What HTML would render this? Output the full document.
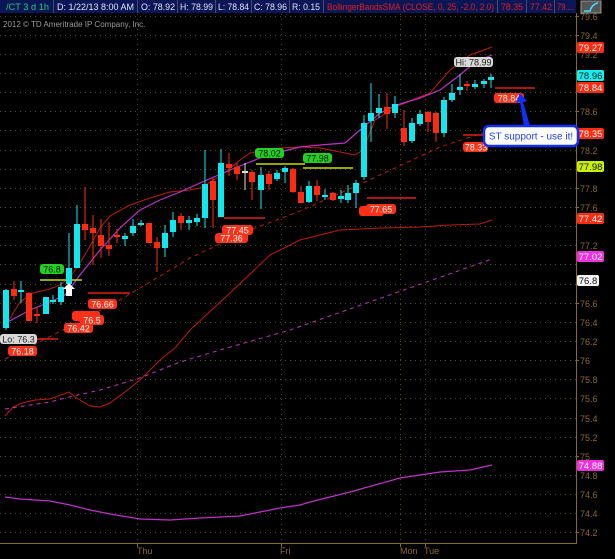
<!DOCTYPE html>
<html><head><meta charset="utf-8"><style>
html,body{margin:0;padding:0;background:#000;width:615px;height:559px;overflow:hidden;font-family:"Liberation Sans",sans-serif}
</style></head><body>
<svg width="615" height="559" xmlns="http://www.w3.org/2000/svg" style="display:block">
<rect width="615" height="559" fill="#000"/>
<!-- header -->
<rect x="0" y="0" width="576" height="13" fill="#0b1656"/>
<g stroke="#4a4a6a" stroke-width="1">
<line x1="53.5" y1="0" x2="53.5" y2="13"/><line x1="137.5" y1="0" x2="137.5" y2="13"/><line x1="177.5" y1="0" x2="177.5" y2="13"/><line x1="215.5" y1="0" x2="215.5" y2="13"/><line x1="251.5" y1="0" x2="251.5" y2="13"/><line x1="289.5" y1="0" x2="289.5" y2="13"/><line x1="323.5" y1="0" x2="323.5" y2="13"/><line x1="497.5" y1="0" x2="497.5" y2="13"/><line x1="526.5" y1="0" x2="526.5" y2="13"/><line x1="554.5" y1="0" x2="554.5" y2="13"/>
</g>
<g font-size="9" fill="#dfe4ff" lengthAdjust="spacingAndGlyphs">
<text x="6" y="10" fill="#20d070" textLength="43" lengthAdjust="spacingAndGlyphs">/CT 3 d 1h</text>
<text x="57" y="10" textLength="77" lengthAdjust="spacingAndGlyphs">D: 1/22/13 8:00 AM</text>
<text x="141" y="10" textLength="34" lengthAdjust="spacingAndGlyphs">O: 78.92</text>
<text x="180" y="10" textLength="33" lengthAdjust="spacingAndGlyphs">H: 78.99</text>
<text x="218" y="10" textLength="31" lengthAdjust="spacingAndGlyphs">L: 78.84</text>
<text x="254" y="10" textLength="33" lengthAdjust="spacingAndGlyphs">C: 78.96</text>
<text x="292" y="10" textLength="28" lengthAdjust="spacingAndGlyphs">R: 0.15</text>
<text x="327" y="10" fill="#e02020" textLength="167" lengthAdjust="spacingAndGlyphs">BollingerBandsSMA (CLOSE, 0, 25, -2.0, 2.0)</text>
<text x="501" y="10" fill="#e02020" textLength="22" lengthAdjust="spacingAndGlyphs">78.35</text>
<text x="530" y="10" fill="#e02020" textLength="22" lengthAdjust="spacingAndGlyphs">77.42</text>
<text x="557" y="10" fill="#e02020" textLength="17" lengthAdjust="spacingAndGlyphs">79....</text>
</g>
<rect x="581" y="1" width="20" height="12" fill="#555" stroke="#999"/>
<path d="M584 11 L590 11 Q592 4 598 3" stroke="#40e0ff" fill="none" stroke-width="1.5"/>
<text x="3" y="27" font-size="8" fill="#9a9a9a">2012 © TD Ameritrade IP Company, Inc.</text>
<!-- grid -->
<g stroke="#5a4818" stroke-width="1" stroke-dasharray="1,4">
<line x1="0" x2="576" y1="16.5" y2="16.5"/><line x1="0" x2="576" y1="35.5" y2="35.5"/><line x1="0" x2="576" y1="54.5" y2="54.5"/><line x1="0" x2="576" y1="73.5" y2="73.5"/><line x1="0" x2="576" y1="92.5" y2="92.5"/><line x1="0" x2="576" y1="111.5" y2="111.5"/><line x1="0" x2="576" y1="130.5" y2="130.5"/><line x1="0" x2="576" y1="150.5" y2="150.5"/><line x1="0" x2="576" y1="169.5" y2="169.5"/><line x1="0" x2="576" y1="188.5" y2="188.5"/><line x1="0" x2="576" y1="207.5" y2="207.5"/><line x1="0" x2="576" y1="226.5" y2="226.5"/><line x1="0" x2="576" y1="245.5" y2="245.5"/><line x1="0" x2="576" y1="264.5" y2="264.5"/><line x1="0" x2="576" y1="284.5" y2="284.5"/><line x1="0" x2="576" y1="303.5" y2="303.5"/><line x1="0" x2="576" y1="322.5" y2="322.5"/><line x1="0" x2="576" y1="341.5" y2="341.5"/><line x1="0" x2="576" y1="360.5" y2="360.5"/><line x1="0" x2="576" y1="379.5" y2="379.5"/><line x1="0" x2="576" y1="398.5" y2="398.5"/><line x1="0" x2="576" y1="418.5" y2="418.5"/><line x1="0" x2="576" y1="437.5" y2="437.5"/><line x1="0" x2="576" y1="456.5" y2="456.5"/><line x1="0" x2="576" y1="475.5" y2="475.5"/><line x1="0" x2="576" y1="494.5" y2="494.5"/><line x1="0" x2="576" y1="513.5" y2="513.5"/><line x1="0" x2="576" y1="532.5" y2="532.5"/>
<line x1="137.5" x2="137.5" y1="14" y2="543"/><line x1="281.5" x2="281.5" y1="14" y2="543"/><line x1="400.5" x2="400.5" y1="14" y2="543"/><line x1="425.5" x2="425.5" y1="14" y2="543"/>
</g>
<!-- axes -->
<g stroke="#8a6a2a" stroke-width="1"><line x1="576.5" y1="13" x2="576.5" y2="544"/><line x1="0" y1="543.5" x2="577" y2="543.5"/>
<line x1="137.5" y1="543" x2="137.5" y2="547"/><line x1="281.5" y1="543" x2="281.5" y2="547"/><line x1="400.5" y1="543" x2="400.5" y2="547"/><line x1="425.5" y1="543" x2="425.5" y2="547"/></g>
<g font-size="9" fill="#8a6a2a">
<text x="137" y="554">Thu</text><text x="280" y="554">Fri</text><text x="400" y="554">Mon</text><text x="424" y="554">Tue</text>
</g>
<g font-size="9" fill="#8a6a2a">
<text x="580" y="20">79.6</text><text x="580" y="39">79.4</text><text x="580" y="58">79.2</text><text x="580" y="115">78.6</text><text x="580" y="154">78.2</text><text x="580" y="192">77.8</text><text x="580" y="211">77.6</text><text x="580" y="249">77.2</text><text x="580" y="307">76.6</text><text x="580" y="326">76.4</text><text x="580" y="345">76.2</text><text x="580" y="364">76</text><text x="580" y="383">75.8</text><text x="580" y="402">75.6</text><text x="580" y="422">75.4</text><text x="580" y="441">75.2</text><text x="580" y="460">75</text><text x="580" y="479">74.8</text><text x="580" y="498">74.6</text><text x="580" y="517">74.4</text><text x="580" y="536">74.2</text>
</g>
<g stroke="#8a6a2a"><line x1="576" x2="579" y1="16.5" y2="16.5"/><line x1="576" x2="579" y1="35.5" y2="35.5"/><line x1="576" x2="579" y1="111.5" y2="111.5"/><line x1="576" x2="579" y1="188.5" y2="188.5"/><line x1="576" x2="579" y1="207.5" y2="207.5"/><line x1="576" x2="579" y1="303.5" y2="303.5"/><line x1="576" x2="579" y1="360.5" y2="360.5"/><line x1="576" x2="579" y1="456.5" y2="456.5"/><line x1="576" x2="579" y1="532.5" y2="532.5"/></g>
<!-- lines -->
<polyline fill="none" stroke="#c01a0a" stroke-width="1" points="6,325 20,302 33,293 50,289 60,285 70,277 80,263 90,246 100,228 110,216 130,205 150,198 170,192 190,190 200,188 222,175 240,160 250,153 280,148 300,147 320,148 340,152 355,155 363,150 375,120 400,105 430,93 450,70 470,55 492,47"/>
<polyline fill="none" stroke="#c01a0a" stroke-width="1" points="5,416 13,407 22,403 35,400 50,399 69,392 75,397 90,406 100,407 110,403 125,392 140,380 160,360 175,348 190,330 230,293 270,255 300,240 340,230 380,228 420,227 450,225 480,224 492,220"/>
<polyline fill="none" stroke="#c01a0a" stroke-width="1" stroke-dasharray="4,4" points="5,359 63,330 120,300 190,258 250,230 300,211 365,182 440,147 492,130"/>
<polyline fill="none" stroke="#c030c0" stroke-width="1" stroke-dasharray="4,4" points="5,409 30,405 50,402 69,397 100,390 140,378 180,362 220,350 290,330 492,259"/>
<polyline fill="none" stroke="#c030c8" stroke-width="1.2" points="6,323 30,310 50,302 65,295 80,275 100,250 120,228 140,210 160,200 180,192 200,183 230,170 260,158 280,152 300,147 320,145 345,143 360,130 380,113 400,104 420,98 440,90 460,75 475,62 492,55"/>
<polyline fill="none" stroke="#c030c8" stroke-width="1.2" points="5,497 20,499 50,501 70,505 90,510 110,514 140,519 170,520 200,518 240,516 260,512 280,508 300,505 310,502 350,492 400,478 440,472 470,470 492,465"/>
<!-- annotations -->
<g stroke="#e02010" stroke-width="1.5">
<line x1="495" y1="88" x2="535" y2="88"/><line x1="463" y1="135" x2="500" y2="135"/><line x1="367" y1="198" x2="416" y2="198"/><line x1="224" y1="218" x2="265" y2="218"/><line x1="88" y1="293" x2="130" y2="293"/><line x1="36" y1="339" x2="58" y2="339"/>
</g>
<g stroke="#c8e000" stroke-width="1.5"><line x1="256" y1="164" x2="305" y2="164"/><line x1="303" y1="168" x2="353" y2="168"/><line x1="40" y1="280" x2="82" y2="280"/></g>
<!-- candles -->
<g stroke-width="1">
<line x1="6" y1="289" x2="6" y2="330" stroke="#10e8f0"/><rect x="3" y="290" width="6" height="38" fill="#10e8f0"/>
<line x1="14" y1="281" x2="14" y2="300" stroke="#ff2a10"/><rect x="11" y="289" width="6" height="7" fill="#ff2a10"/>
<line x1="21" y1="281" x2="21" y2="303" stroke="#10e8f0"/><rect x="18" y="290" width="6" height="2" fill="#10e8f0"/>
<line x1="29" y1="292" x2="29" y2="321" stroke="#ff2a10"/><rect x="26" y="293" width="6" height="28" fill="#ff2a10"/>
<line x1="37" y1="307" x2="37" y2="323" stroke="#ff2a10"/><rect x="34" y="314" width="6" height="2" fill="#ff2a10"/>
<line x1="45" y1="297" x2="45" y2="314" stroke="#10e8f0"/><rect x="43" y="297" width="6" height="17" fill="#10e8f0"/>
<line x1="53" y1="295" x2="53" y2="304" stroke="#10e8f0"/><rect x="50" y="300" width="6" height="2" fill="#10e8f0"/>
<line x1="61" y1="282" x2="61" y2="305" stroke="#10e8f0"/><rect x="58" y="287" width="6" height="15" fill="#10e8f0"/>
<line x1="69" y1="233" x2="69" y2="290" stroke="#10e8f0"/><rect x="66" y="268" width="6" height="16" fill="#10e8f0"/>
<line x1="77" y1="205" x2="77" y2="268" stroke="#10e8f0"/><rect x="74" y="224" width="6" height="44" fill="#10e8f0"/>
<line x1="85" y1="187" x2="85" y2="240" stroke="#ff2a10"/><rect x="82" y="224" width="6" height="6" fill="#ff2a10"/>
<line x1="93" y1="215" x2="93" y2="265" stroke="#ff2a10"/><rect x="90" y="228" width="6" height="5" fill="#ff2a10"/>
<line x1="101" y1="219" x2="101" y2="258" stroke="#ff2a10"/><rect x="98" y="235" width="6" height="11" fill="#ff2a10"/>
<line x1="109" y1="222" x2="109" y2="256" stroke="#ff2a10"/><rect x="106" y="245" width="6" height="4" fill="#ff2a10"/>
<line x1="117" y1="229" x2="117" y2="243" stroke="#ff2a10"/><rect x="114" y="235" width="6" height="2" fill="#ff2a10"/>
<line x1="125" y1="233" x2="125" y2="246" stroke="#10e8f0"/><rect x="122" y="236" width="6" height="3" fill="#10e8f0"/>
<line x1="133" y1="219" x2="133" y2="236" stroke="#10e8f0"/><rect x="130" y="226" width="6" height="7" fill="#10e8f0"/>
<line x1="141" y1="220" x2="141" y2="226" stroke="#10e8f0"/><rect x="138" y="223" width="6" height="2" fill="#10e8f0"/>
<line x1="149" y1="223" x2="149" y2="243" stroke="#ff2a10"/><rect x="146" y="223" width="6" height="20" fill="#ff2a10"/>
<line x1="157" y1="237" x2="157" y2="272" stroke="#ff2a10"/><rect x="154" y="242" width="6" height="6" fill="#ff2a10"/>
<line x1="165" y1="225" x2="165" y2="257" stroke="#10e8f0"/><rect x="162" y="233" width="6" height="15" fill="#10e8f0"/>
<line x1="173" y1="212" x2="173" y2="237" stroke="#10e8f0"/><rect x="170" y="220" width="6" height="12" fill="#10e8f0"/>
<line x1="181" y1="213" x2="181" y2="230" stroke="#ff2a10"/><rect x="178" y="216" width="6" height="7" fill="#ff2a10"/>
<line x1="189" y1="216" x2="189" y2="230" stroke="#10e8f0"/><rect x="186" y="220" width="6" height="3" fill="#10e8f0"/>
<line x1="197" y1="214" x2="197" y2="226" stroke="#10e8f0"/><rect x="194" y="218" width="6" height="4" fill="#10e8f0"/>
<line x1="205" y1="150" x2="205" y2="228" stroke="#10e8f0"/><rect x="202" y="184" width="6" height="34" fill="#10e8f0"/>
<line x1="213" y1="178" x2="213" y2="228" stroke="#ff2a10"/><rect x="210" y="181" width="6" height="19" fill="#ff2a10"/>
<line x1="221" y1="149" x2="221" y2="217" stroke="#10e8f0"/><rect x="218" y="163" width="6" height="54" fill="#10e8f0"/>
<line x1="229" y1="153" x2="229" y2="176" stroke="#ff2a10"/><rect x="226" y="164" width="6" height="4" fill="#ff2a10"/>
<line x1="237" y1="163" x2="237" y2="180" stroke="#ff2a10"/><rect x="234" y="167" width="6" height="7" fill="#ff2a10"/>
<line x1="245" y1="163" x2="245" y2="190" stroke="#ddd"/><rect x="242" y="171" width="6" height="2" fill="#ddd"/>
<line x1="252" y1="170" x2="252" y2="200" stroke="#ff2a10"/><rect x="249" y="172" width="6" height="10" fill="#ff2a10"/>
<line x1="261" y1="167" x2="261" y2="209" stroke="#10e8f0"/><rect x="258" y="175" width="6" height="15" fill="#10e8f0"/>
<line x1="269" y1="171" x2="269" y2="190" stroke="#ff2a10"/><rect x="266" y="174" width="6" height="10" fill="#ff2a10"/>
<line x1="277" y1="170" x2="277" y2="181" stroke="#10e8f0"/><rect x="274" y="173" width="6" height="6" fill="#10e8f0"/>
<line x1="285" y1="166" x2="285" y2="183" stroke="#10e8f0"/><rect x="282" y="168" width="6" height="4" fill="#10e8f0"/>
<line x1="293" y1="168" x2="293" y2="193" stroke="#ff2a10"/><rect x="290" y="169" width="6" height="23" fill="#ff2a10"/>
<line x1="301" y1="186" x2="301" y2="203" stroke="#ff2a10"/><rect x="298" y="192" width="6" height="11" fill="#ff2a10"/>
<line x1="309" y1="181" x2="309" y2="203" stroke="#10e8f0"/><rect x="306" y="186" width="6" height="16" fill="#10e8f0"/>
<line x1="317" y1="180" x2="317" y2="201" stroke="#ff2a10"/><rect x="314" y="186" width="6" height="9" fill="#ff2a10"/>
<line x1="325" y1="189" x2="325" y2="200" stroke="#10e8f0"/><rect x="322" y="195" width="6" height="2" fill="#10e8f0"/>
<line x1="333" y1="192" x2="333" y2="201" stroke="#ff2a10"/><rect x="330" y="193" width="6" height="7" fill="#ff2a10"/>
<line x1="341" y1="190" x2="341" y2="203" stroke="#10e8f0"/><rect x="338" y="196" width="6" height="3" fill="#10e8f0"/>
<line x1="348" y1="185" x2="348" y2="203" stroke="#10e8f0"/><rect x="345" y="193" width="6" height="7" fill="#10e8f0"/>
<line x1="356" y1="180" x2="356" y2="208" stroke="#10e8f0"/><rect x="353" y="183" width="6" height="10" fill="#10e8f0"/>
<line x1="364" y1="115" x2="364" y2="180" stroke="#10e8f0"/><rect x="361" y="123" width="6" height="54" fill="#10e8f0"/>
<line x1="371" y1="83" x2="371" y2="142" stroke="#10e8f0"/><rect x="368" y="113" width="6" height="8" fill="#10e8f0"/>
<line x1="379" y1="94" x2="379" y2="118" stroke="#10e8f0"/><rect x="376" y="108" width="6" height="5" fill="#10e8f0"/>
<line x1="387" y1="93" x2="387" y2="129" stroke="#ff2a10"/><rect x="384" y="107" width="6" height="7" fill="#ff2a10"/>
<line x1="395" y1="96" x2="395" y2="118" stroke="#10e8f0"/><rect x="392" y="104" width="6" height="9" fill="#10e8f0"/>
<line x1="404" y1="110" x2="404" y2="146" stroke="#ff2a10"/><rect x="401" y="128" width="6" height="14" fill="#ff2a10"/>
<line x1="412" y1="118" x2="412" y2="143" stroke="#10e8f0"/><rect x="409" y="123" width="6" height="18" fill="#10e8f0"/>
<line x1="420" y1="110" x2="420" y2="126" stroke="#10e8f0"/><rect x="417" y="114" width="6" height="10" fill="#10e8f0"/>
<line x1="428" y1="111" x2="428" y2="132" stroke="#ff2a10"/><rect x="425" y="112" width="6" height="10" fill="#ff2a10"/>
<line x1="436" y1="112" x2="436" y2="142" stroke="#ff2a10"/><rect x="433" y="113" width="6" height="20" fill="#ff2a10"/>
<line x1="444" y1="97" x2="444" y2="137" stroke="#10e8f0"/><rect x="441" y="100" width="6" height="33" fill="#10e8f0"/>
<line x1="452" y1="84" x2="452" y2="102" stroke="#10e8f0"/><rect x="449" y="93" width="6" height="7" fill="#10e8f0"/>
<line x1="460" y1="74" x2="460" y2="95" stroke="#10e8f0"/><rect x="457" y="87" width="6" height="3" fill="#10e8f0"/>
<line x1="467" y1="81" x2="467" y2="91" stroke="#ff2a10"/><rect x="464" y="84" width="6" height="2" fill="#ff2a10"/>
<line x1="475" y1="80" x2="475" y2="89" stroke="#10e8f0"/><rect x="472" y="84" width="6" height="3" fill="#10e8f0"/>
<line x1="484" y1="79" x2="484" y2="88" stroke="#10e8f0"/><rect x="481" y="81" width="6" height="3" fill="#10e8f0"/>
<line x1="491" y1="74" x2="491" y2="88" stroke="#10e8f0"/><rect x="488" y="77" width="6" height="3" fill="#10e8f0"/>
</g>
<path d="M66 296 L66 289 L63 289 L69 283 L75 289 L72 289 L72 296Z" fill="#fff"/>
<g font-size="9" text-anchor="middle">
<rect x="454" y="57" width="39" height="10" rx="3" fill="#d8d8d8"/><text x="473.5" y="65.5" fill="#222">Hi: 78.99</text>
<rect x="0" y="334" width="37" height="10" rx="3" fill="#d8d8d8"/><text x="18.5" y="342.5" fill="#222">Lo: 76.3</text>
<rect x="255" y="148" width="29" height="10" rx="3" fill="#22d022"/><text x="269.5" y="156.5" fill="#111">78.02</text>
<rect x="303" y="153" width="29" height="10" rx="3" fill="#22d022"/><text x="317.5" y="161.5" fill="#111">77.98</text>
<rect x="40" y="264" width="24" height="10" rx="3" fill="#22d022"/><text x="52" y="272.5" fill="#111">76.8</text>
<g fill="#ff3018"><rect x="494" y="93" width="30" height="10" rx="3"/><rect x="463" y="142" width="25" height="10" rx="3"/><rect x="359" y="206" width="25" height="10" rx="3"/><rect x="366" y="204" width="30" height="10" rx="3"/><rect x="215" y="233" width="33" height="10" rx="3"/><rect x="222" y="225" width="31" height="10" rx="3"/><rect x="64" y="323" width="29" height="10" rx="3"/><rect x="72" y="311" width="28" height="10" rx="3"/><rect x="80" y="315" width="24" height="10" rx="3"/><rect x="88" y="299" width="29" height="10" rx="3"/><rect x="8" y="346" width="29" height="10" rx="3"/></g>
<g fill="#fff"><text x="509" y="101.5">78.84</text><text x="476" y="150.5">78.33</text><text x="381" y="212.5">77.65</text><text x="231.5" y="241.5">77.36</text><text x="237.5" y="233.5">77.45</text><text x="78.5" y="331.5">76.42</text><text x="92" y="323.5">76.5</text><text x="102.5" y="307.5">76.66</text><text x="22.5" y="354.5">76.18</text></g>
</g>
<!-- callout -->
<path d="M524 126 L520 102 L516 103 L520 93 L527 101 L523 102 L530 126Z" fill="#1030ff"/>
<!-- right price labels -->
<g font-size="9.5" text-anchor="middle">
<rect x="577" y="42" width="27" height="11" rx="2" fill="#ff2a10"/><text x="590.5" y="51" fill="#fff">79.27</text>
<rect x="577" y="70" width="27" height="11" rx="2" fill="#10f0f0"/><text x="590.5" y="79" fill="#111">78.96</text>
<rect x="577" y="82" width="27" height="11" rx="2" fill="#ff2a10"/><text x="590.5" y="91" fill="#fff">78.84</text>
<rect x="577" y="128" width="27" height="11" rx="2" fill="#ff2a10"/><text x="590.5" y="137" fill="#fff">78.35</text>
<rect x="577" y="161" width="27" height="11" rx="2" fill="#c8f000"/><text x="590.5" y="170" fill="#111">77.98</text>
<rect x="577" y="213" width="27" height="11" rx="2" fill="#ff2a10"/><text x="590.5" y="222" fill="#fff">77.42</text>
<rect x="577" y="251" width="27" height="11" rx="2" fill="#f030e0"/><text x="590.5" y="260" fill="#fff">77.02</text>
<rect x="577" y="275" width="22" height="11" rx="2" fill="#f4f4f4"/><text x="588" y="284" fill="#111">76.8</text>
<rect x="577" y="460" width="27" height="11" rx="2" fill="#f030e0"/><text x="590.5" y="469" fill="#fff">74.88</text>
</g>
<rect x="484" y="126" width="94" height="20" rx="5" fill="#fff" stroke="#1030ff" stroke-width="2.5"/>
<text x="531" y="139.5" font-size="10" text-anchor="middle" fill="#2040ff">ST support - use it!</text>
</svg>
</body></html>
